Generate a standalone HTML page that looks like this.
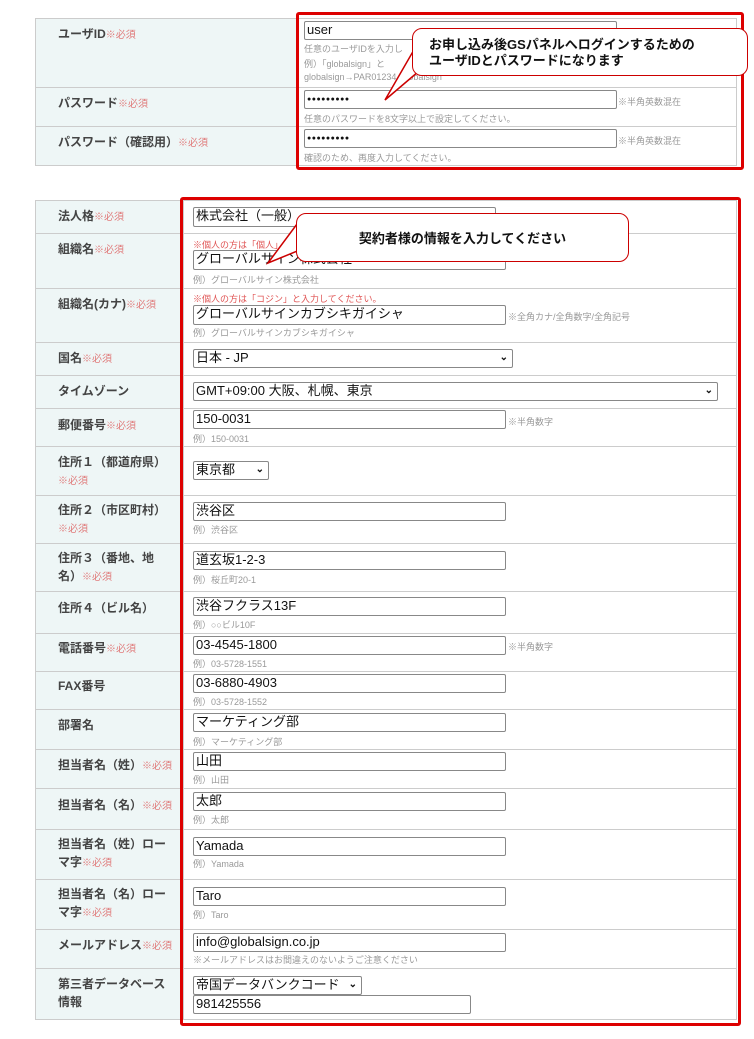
<!DOCTYPE html>
<html><head><meta charset="utf-8"><style>
*{margin:0;padding:0;box-sizing:border-box}
body{width:754px;height:1039px;background:#fff;position:relative;overflow:hidden;font-family:"Liberation Sans","Noto Sans CJK JP",sans-serif;color:#333}
.a{position:absolute}
.lb{position:absolute;background:#eef6f6;border:1px solid #ccc}
.cell{position:absolute;background:#fff;border:1px solid #ccc}
.lt{position:absolute;left:58px;font-size:12px;font-weight:bold;color:#444;line-height:18px}
.req{color:#e07a7a;font-weight:normal;font-size:10px}
.in{position:absolute;border:1px solid #888;border-radius:2px;background:#fff;font-size:13px;line-height:16px;padding-left:2px;color:#111;white-space:nowrap;overflow:hidden}
.ex{position:absolute;font-size:9px;color:#999;white-space:nowrap}
.hint{position:absolute;font-size:9px;color:#999;white-space:nowrap}
.note{position:absolute;font-size:9px;color:#e05555;white-space:nowrap}
.arr{position:absolute;right:4px;top:0;font-size:10px;font-weight:bold}
.red{position:absolute;border:3px solid #d00;border-radius:3px}
.call{position:absolute;background:#fff;border:1.5px solid #c00;border-radius:10px;font-size:13px;font-weight:bold;color:#111;line-height:16px}
.pw{font-size:7px;font-weight:bold;letter-spacing:0.5px;line-height:17px}
</style></head><body>
<div class="lb" style="left:35px;top:18px;width:264px;height:148px"></div>
<div class="cell" style="left:298px;top:18px;width:439px;height:148px"></div>
<div class="a" style="left:35px;top:87px;width:702px;height:1px;background:#ccc"></div>
<div class="a" style="left:35px;top:126px;width:702px;height:1px;background:#ccc"></div>
<div class="lt" style="top:25px">ユーザID<span class="req">※必須</span></div>
<div class="lt" style="top:94px">パスワード<span class="req">※必須</span></div>
<div class="lt" style="top:133px">パスワード（確認用）<span class="req">※必須</span></div>
<div class="in" style="left:304px;top:21px;width:313px;height:19px">user</div>
<div class="ex" style="left:304px;top:42px">任意のユーザIDを入力し</div>
<div class="ex" style="left:304px;top:57px">例）「globalsign」と</div>
<div class="ex" style="left:304px;top:72px">globalsign→PAR01234_globalsign</div>
<div class="in pw" style="left:304px;top:90px;width:313px;height:19px">●●●●●●●●●</div>
<div class="hint" style="left:618px;top:95px">※半角英数混在</div>
<div class="ex" style="left:304px;top:112px">任意のパスワードを8文字以上で設定してください。</div>
<div class="in pw" style="left:304px;top:129px;width:313px;height:19px">●●●●●●●●●</div>
<div class="hint" style="left:618px;top:134px">※半角英数混在</div>
<div class="ex" style="left:304px;top:151px">確認のため、再度入力してください。</div>
<div class="red" style="left:296px;top:12px;width:448px;height:158px"></div>
<svg class="a" style="left:380px;top:30px" width="60" height="75"><path d="M35 18 L5 70 L52 30" fill="#fff" stroke="#c00" stroke-width="1.5"/></svg>
<div class="call" style="left:412px;top:28px;width:336px;height:48px;padding:8px 0 0 16px">お申し込み後GSパネルへログインするための<br>ユーザIDとパスワードになります</div>

<div class="lb" style="left:35px;top:200px;width:149px;height:820px"></div>
<div class="cell" style="left:183px;top:200px;width:554px;height:820px"></div>
<div class="a" style="left:35px;top:233px;width:702px;height:1px;background:#ccc"></div>
<div class="a" style="left:35px;top:288px;width:702px;height:1px;background:#ccc"></div>
<div class="a" style="left:35px;top:342px;width:702px;height:1px;background:#ccc"></div>
<div class="a" style="left:35px;top:375px;width:702px;height:1px;background:#ccc"></div>
<div class="a" style="left:35px;top:408px;width:702px;height:1px;background:#ccc"></div>
<div class="a" style="left:35px;top:446px;width:702px;height:1px;background:#ccc"></div>
<div class="a" style="left:35px;top:495px;width:702px;height:1px;background:#ccc"></div>
<div class="a" style="left:35px;top:543px;width:702px;height:1px;background:#ccc"></div>
<div class="a" style="left:35px;top:591px;width:702px;height:1px;background:#ccc"></div>
<div class="a" style="left:35px;top:633px;width:702px;height:1px;background:#ccc"></div>
<div class="a" style="left:35px;top:671px;width:702px;height:1px;background:#ccc"></div>
<div class="a" style="left:35px;top:709px;width:702px;height:1px;background:#ccc"></div>
<div class="a" style="left:35px;top:749px;width:702px;height:1px;background:#ccc"></div>
<div class="a" style="left:35px;top:788px;width:702px;height:1px;background:#ccc"></div>
<div class="a" style="left:35px;top:829px;width:702px;height:1px;background:#ccc"></div>
<div class="a" style="left:35px;top:879px;width:702px;height:1px;background:#ccc"></div>
<div class="a" style="left:35px;top:929px;width:702px;height:1px;background:#ccc"></div>
<div class="a" style="left:35px;top:968px;width:702px;height:1px;background:#ccc"></div>

<div class="lt" style="top:207px">法人格<span class="req">※必須</span></div>
<div class="lt" style="top:240px">組織名<span class="req">※必須</span></div>
<div class="lt" style="top:295px">組織名(カナ)<span class="req">※必須</span></div>
<div class="lt" style="top:349px">国名<span class="req">※必須</span></div>
<div class="lt" style="top:382px">タイムゾーン</div>
<div class="lt" style="top:416px">郵便番号<span class="req">※必須</span></div>
<div class="lt" style="top:453px">住所１（都道府県）<br><span class="req">※必須</span></div>
<div class="lt" style="top:501px">住所２（市区町村）<br><span class="req">※必須</span></div>
<div class="lt" style="top:549px;width:110px">住所３（番地、地名）<span class="req">※必須</span></div>
<div class="lt" style="top:599px">住所４（ビル名）</div>
<div class="lt" style="top:639px">電話番号<span class="req">※必須</span></div>
<div class="lt" style="top:677px">FAX番号</div>
<div class="lt" style="top:716px">部署名</div>
<div class="lt" style="top:756px">担当者名（姓）<span class="req">※必須</span></div>
<div class="lt" style="top:796px">担当者名（名）<span class="req">※必須</span></div>
<div class="lt" style="top:835px;width:112px">担当者名（姓）ローマ字<span class="req">※必須</span></div>
<div class="lt" style="top:885px;width:112px">担当者名（名）ローマ字<span class="req">※必須</span></div>
<div class="lt" style="top:936px">メールアドレス<span class="req">※必須</span></div>
<div class="lt" style="top:975px;width:112px">第三者データベース情報</div>

<div class="in" style="left:193px;top:207px;width:303px;height:20px">株式会社（一般）</div>
<div class="note" style="left:193px;top:238px">※個人の方は「個人」と入力してください。</div>
<div class="in" style="left:193px;top:250px;width:313px;height:20px">グローバルサイン株式会社</div>
<div class="ex" style="left:193px;top:273px">例）グローバルサイン株式会社</div>
<div class="note" style="left:193px;top:292px">※個人の方は「コジン」と入力してください。</div>
<div class="in" style="left:193px;top:305px;width:313px;height:20px">グローバルサインカブシキガイシャ</div>
<div class="hint" style="left:508px;top:310px">※全角カナ/全角数字/全角記号</div>
<div class="ex" style="left:193px;top:326px">例）グローバルサインカブシキガイシャ</div>
<div class="in" style="left:193px;top:349px;width:320px;height:19px">日本 - JP<span class="arr">&#8964;</span></div>
<div class="in" style="left:193px;top:382px;width:525px;height:19px">GMT+09:00 大阪、札幌、東京<span class="arr">&#8964;</span></div>
<div class="in" style="left:193px;top:410px;width:313px;height:19px">150-0031</div>
<div class="hint" style="left:508px;top:415px">※半角数字</div>
<div class="ex" style="left:193px;top:432px">例）150-0031</div>
<div class="in" style="left:193px;top:461px;width:76px;height:19px">東京都<span class="arr">&#8964;</span></div>
<div class="in" style="left:193px;top:502px;width:313px;height:19px">渋谷区</div>
<div class="ex" style="left:193px;top:523px">例）渋谷区</div>
<div class="in" style="left:193px;top:551px;width:313px;height:19px">道玄坂1-2-3</div>
<div class="ex" style="left:193px;top:573px">例）桜丘町20-1</div>
<div class="in" style="left:193px;top:597px;width:313px;height:19px">渋谷フクラス13F</div>
<div class="ex" style="left:193px;top:618px">例）○○ビル10F</div>
<div class="in" style="left:193px;top:636px;width:313px;height:19px">03-4545-1800</div>
<div class="hint" style="left:508px;top:640px">※半角数字</div>
<div class="ex" style="left:193px;top:657px">例）03-5728-1551</div>
<div class="in" style="left:193px;top:674px;width:313px;height:19px">03-6880-4903</div>
<div class="ex" style="left:193px;top:695px">例）03-5728-1552</div>
<div class="in" style="left:193px;top:713px;width:313px;height:19px">マーケティング部</div>
<div class="ex" style="left:193px;top:735px">例）マーケティング部</div>
<div class="in" style="left:193px;top:752px;width:313px;height:19px">山田</div>
<div class="ex" style="left:193px;top:773px">例）山田</div>
<div class="in" style="left:193px;top:792px;width:313px;height:19px">太郎</div>
<div class="ex" style="left:193px;top:813px">例）太郎</div>
<div class="in" style="left:193px;top:837px;width:313px;height:19px">Yamada</div>
<div class="ex" style="left:193px;top:857px">例）Yamada</div>
<div class="in" style="left:193px;top:887px;width:313px;height:19px">Taro</div>
<div class="ex" style="left:193px;top:908px">例）Taro</div>
<div class="in" style="left:193px;top:933px;width:313px;height:19px">info@globalsign.co.jp</div>
<div class="ex" style="left:193px;top:953px">※メールアドレスはお間違えのないようご注意ください</div>
<div class="in" style="left:193px;top:976px;width:169px;height:19px">帝国データバンクコード<span class="arr">&#8964;</span></div>
<div class="in" style="left:193px;top:995px;width:278px;height:19px">981425556</div>

<div class="red" style="left:180px;top:197px;width:561px;height:829px"></div>
<svg class="a" style="left:260px;top:215px" width="60" height="55"><path d="M40 5 L8 48 L52 30" fill="#fff" stroke="#c00" stroke-width="1.5"/></svg>
<div class="call" style="left:296px;top:213px;width:333px;height:49px;text-align:center;padding-top:17px">契約者様の情報を入力してください</div>
</body></html>
